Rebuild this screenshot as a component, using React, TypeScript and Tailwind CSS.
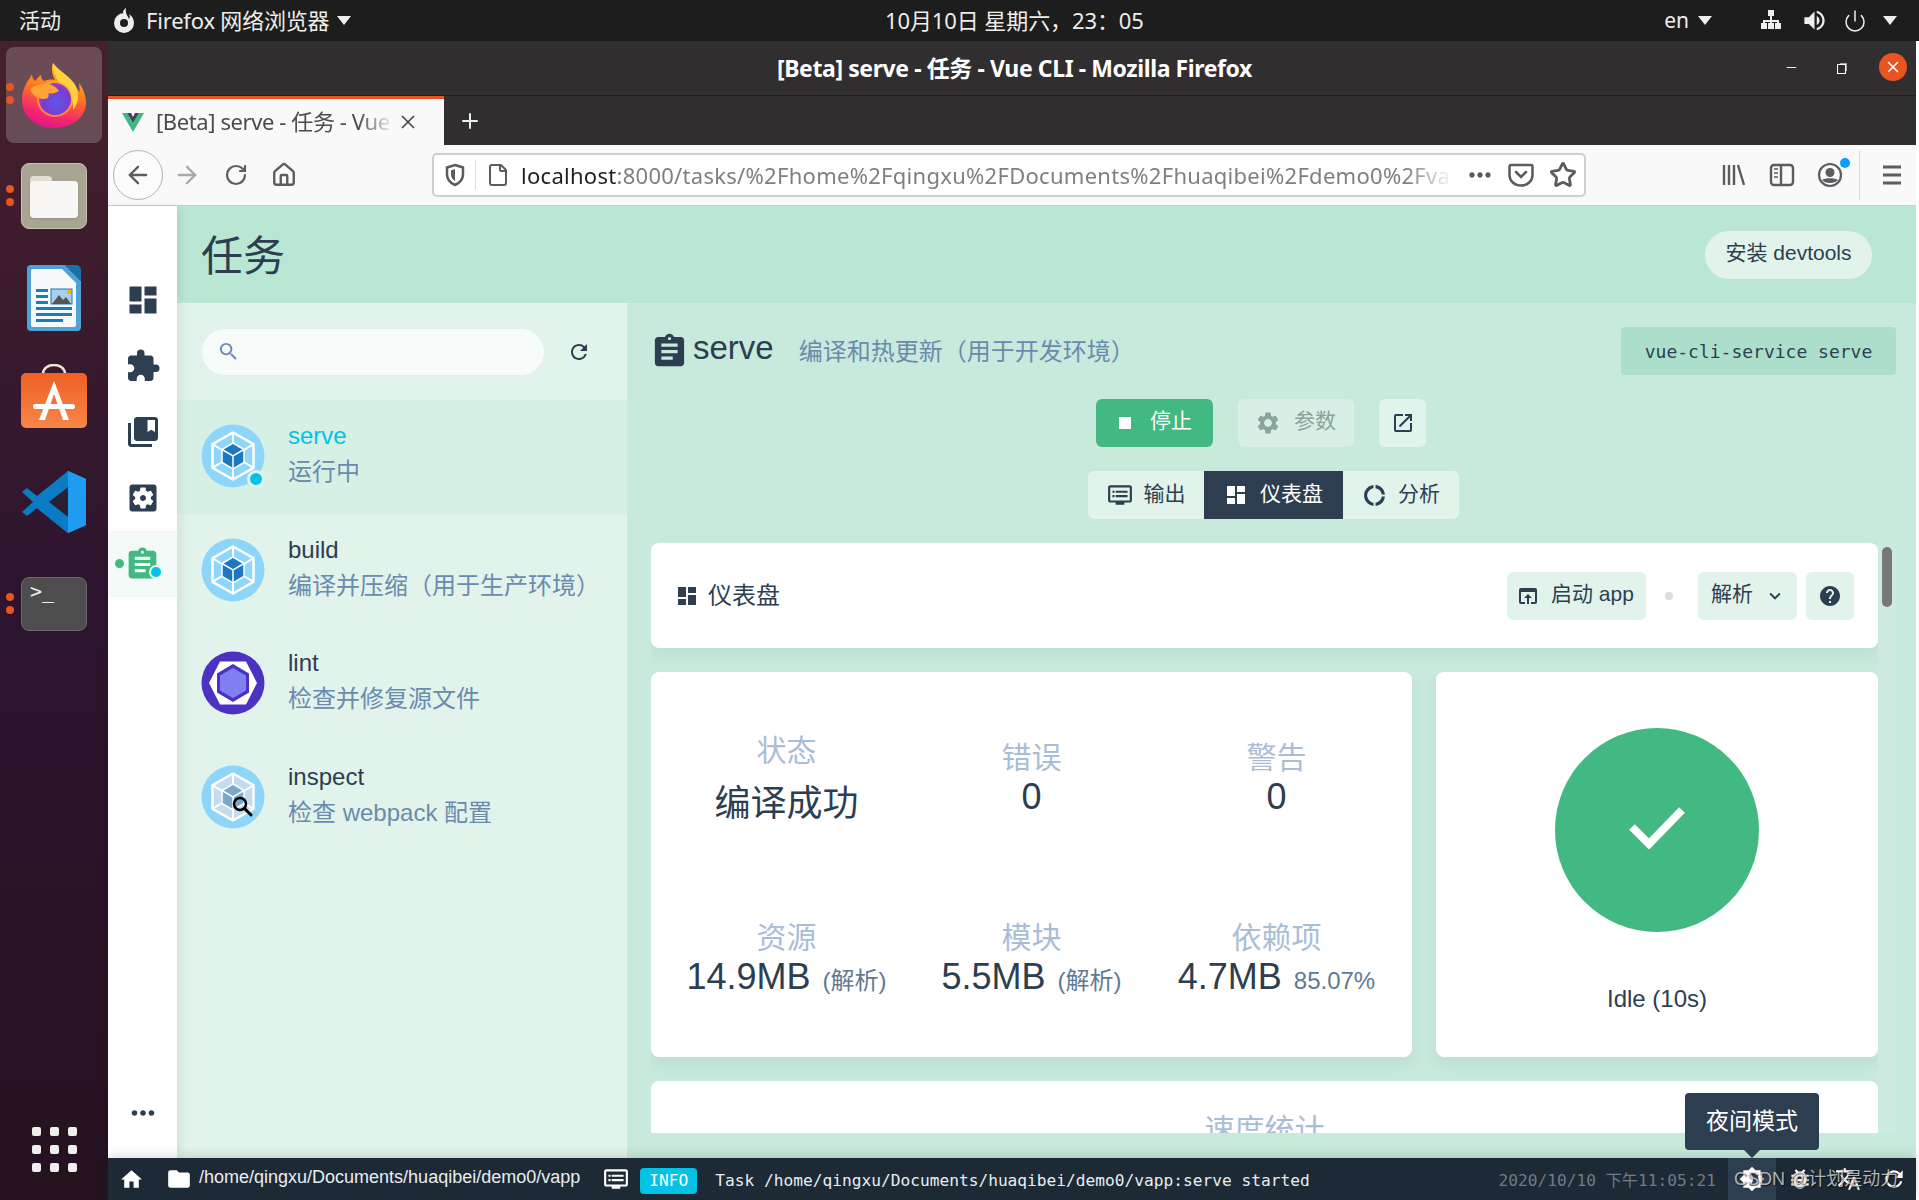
import { ArrowLeft, ArrowRight, RotateCw, Home, File, Star, Power, X, Plus, Minus } from "lucide-react";
import {
  MdDashboard,
  MdExtension,
  MdCollectionsBookmark,
  MdSettingsApplications,
  MdAssignment,
  MdSearch,
  MdRefresh,
  MdStop,
  MdSettings,
  MdOpenInNew,
  MdDvr,
  MdDonutLarge,
  MdOpenInBrowser,
  MdHelp,
  MdKeyboardArrowDown,
  MdHome,
  MdFolder,
  MdMoreHoriz,
  MdBrightness4,
  MdBugReport,
  MdTranslate,
  MdVolumeUp,
} from "react-icons/md";

const Caret = ({ className = "" }: { className?: string }) => (
  <svg width="14" height="9" viewBox="0 0 14 9" className={className}>
    <path d="M0 0h14L7 9z" fill="#eee" />
  </svg>
);

function FirefoxLogo() {
  return (
    <svg width="64" height="66" viewBox="0 0 64 66" className="mt-[2px]">
      <defs>
        <linearGradient id="ff-body" x1="0.7" y1="0" x2="0.4" y2="1">
          <stop offset="0" stopColor="#ffc629" />
          <stop offset="0.45" stopColor="#ff7a1f" />
          <stop offset="0.8" stopColor="#f5276c" />
          <stop offset="1" stopColor="#e31587" />
        </linearGradient>
        <radialGradient id="ff-globe" cx="0.55" cy="0.6" r="0.6">
          <stop offset="0" stopColor="#5f5ae6" />
          <stop offset="0.7" stopColor="#7b3ad0" />
          <stop offset="1" stopColor="#a73cc0" />
        </radialGradient>
      </defs>
      <path d="M31 1c5 8 19 14 25 27 2 3 2 2 1-7 4 5 7 13 7 20 0 14-14 25-32 25S0 55 0 38c0-8 3-16 8-22l2-4c0 3 1 5 3 7 2-2 4-5 6-6 0 3 1 5 3 6 3-1 7-2 11-1C30 13 29 7 31 1z" fill="url(#ff-body)" />
      <path d="M31 1c6 8 15 12 21 20 6 9 5 20-1 27 1-11-5-21-13-25-3-7-8-13-7-22z" fill="#ffd43b" />
      <circle cx="33" cy="37" r="18" fill="#ffb02e" opacity="0.65" />
      <circle cx="33" cy="37" r="16" fill="url(#ff-globe)" />
      <path d="M8 27c6-5 14-6 19-5 4 1 7 3 10 7-5 3-9 3-11 2 2 3 0 6-4 6-7 0-12-4-14-10z" fill="#ffa436" />
    </svg>
  );
}

function WriterLogo() {
  return (
    <svg width="56" height="68" viewBox="0 0 56 68">
      <path d="M5 1h34l16 16v46a4 4 0 0 1-4 4H5a4 4 0 0 1-4-4V5a4 4 0 0 1 4-4z" fill="#4da3d6" />
      <path d="M7 5h29l14 14v42a2 2 0 0 1-2 2H7a2 2 0 0 1-2-2V7a2 2 0 0 1 2-2z" fill="#f6f8fa" />
      <path d="M39 1l16 16V6a5 5 0 0 0-5-5z" fill="#1374ab" />
      <g fill="#1a7cb8">
        <rect x="10" y="25" width="12" height="3" />
        <rect x="10" y="31" width="12" height="3" />
        <rect x="10" y="37" width="12" height="3" />
        <rect x="10" y="43" width="36" height="3" />
        <rect x="10" y="49" width="36" height="3" />
        <rect x="10" y="55" width="27" height="3" />
      </g>
      <rect x="25" y="25" width="21" height="15" fill="#a9d0ea" stroke="#1a7cb8" />
      <path d="M26 40l7-9 4 5 3-3 5 7z" fill="#555" />
      <rect x="41" y="26" width="4" height="4" fill="#f4b400" />
    </svg>
  );
}

function StoreLogo() {
  return (
    <svg width="66" height="64" viewBox="0 0 66 64" className="-mt-[8px]">
      <defs>
        <linearGradient id="store-bg" x1="0" y1="0" x2="0" y2="1">
          <stop offset="0" stopColor="#f05f22" />
          <stop offset="1" stopColor="#f8864a" />
        </linearGradient>
      </defs>
      <path d="M22 10c0-12 22-12 22 0" fill="none" stroke="#f3e3d0" strokeWidth="2.5" />
      <rect x="0" y="9" width="66" height="55" rx="5" fill="url(#store-bg)" />
      <path d="M33 17L18 56h6l9-26 9 26h6z" fill="#fff" />
      <rect x="12" y="40" width="42" height="5" rx="2.5" fill="#fff" />
    </svg>
  );
}

function VsCodeLogo() {
  return (
    <svg width="64" height="64" viewBox="0 0 64 64">
      <path d="M46 1L64 9v46l-18 8-31-25z" fill="#1f9cf0" />
      <path d="M46 1L15 26 5 18 0 22l11 10L0 42l5 4 10-8 31 25 2-2V3z" fill="#0a7cc4" />
      <path d="M46 17v30L27 32z" fill="#2b2032" />
      <path d="M46 1l18 8v46l-18 8z" fill="#1f9cf0" />
    </svg>
  );
}

function Webpack({ muted = false }: { muted?: boolean }) {
  const dark = muted ? "#7ba7cd" : "#1c78c0";
  const light = muted ? "#c3dbee" : "#8ed6fb";
  return (
    <svg width="64" height="64" viewBox="0 0 64 64">
      <circle cx="32" cy="32" r="31.5" fill="#8dd6f9" />
      <path d="M32 8.5L52.5 20.2V43.8L32 55.5L11.5 43.8V20.2z" fill={light} stroke="#fff" strokeWidth="2.5" strokeLinejoin="round" />
      <path d="M32 8.5V19M52.5 20.2L43 26M52.5 43.8L43 38M32 55.5V45M11.5 43.8L21 38M11.5 20.2L21 26" stroke="#fff" strokeWidth="2" />
      <path d="M32 19L43 25.5V38.5L32 45L21 38.5V25.5z" fill={dark} stroke="#fff" strokeWidth="1.5" />
      <path d="M21 25.5L32 32L43 25.5M32 32V45" fill="none" stroke="#fff" strokeWidth="1.5" />
      {muted && (
        <>
          <circle cx="39" cy="39" r="6" fill="none" stroke="#000" strokeWidth="2.5" />
          <path d="M43.5 43.5L50 50" stroke="#000" strokeWidth="3" strokeLinecap="round" />
        </>
      )}
    </svg>
  );
}

function Eslint() {
  return (
    <svg width="64" height="64" viewBox="0 0 64 64">
      <circle cx="32" cy="32" r="31.5" fill="#4b32c3" />
      <path d="M19 10.5H45L56 32L45 53.5H19L8 32z" fill="#fff" />
      <path d="M32 13L48 22.5V41.5L32 51L16 41.5V22.5z" fill="#4b32c3" />
      <path d="M32 17L45 24.5V39.5L32 47L19 39.5V24.5z" fill="#8080f2" />
    </svg>
  );
}

function DockItem({ dots = false, active = false, children }: { dots?: boolean; active?: boolean; children: React.ReactNode }) {
  return (
    <div className="relative w-full h-[102px] shrink-0 flex items-center justify-center">
      {active && <div className="absolute left-[6px] top-[4px] w-[96px] h-[96px] rounded-lg bg-white/20" />}
      {dots && (
        <div className="absolute left-[6px] top-[40px] flex flex-col gap-[5px]">
          <span className="w-[8px] h-[8px] rounded-full bg-[#e95420]" />
          <span className="w-[8px] h-[8px] rounded-full bg-[#e95420]" />
        </div>
      )}
      <div className="relative">{children}</div>
    </div>
  );
}

function Dock() {
  return (
    <aside className="w-[108px] shrink-0 flex flex-col pt-[2px] bg-gradient-to-b from-[#47202c] via-[#2c142e] to-[#25121f]">
      <DockItem dots active>
        <FirefoxLogo />
      </DockItem>
      <DockItem dots>
        <div className="w-[66px] h-[66px] rounded-lg bg-[#aaa493] flex items-center justify-center border border-[#c6c1b3]">
          <div className="relative w-[48px] h-[42px] mt-[2px]">
            <div className="absolute left-0 top-0 w-[22px] h-[12px] rounded-t bg-[#e2dfd5]" />
            <div className="absolute left-0 top-[5px] w-[48px] h-[37px] rounded bg-[#f8f7f5] shadow" />
          </div>
        </div>
      </DockItem>
      <DockItem>
        <WriterLogo />
      </DockItem>
      <DockItem>
        <StoreLogo />
      </DockItem>
      <DockItem>
        <VsCodeLogo />
      </DockItem>
      <DockItem dots>
        <div className="w-[66px] h-[54px] rounded-lg bg-[#4d4d4d] border border-[#6b6b6b] pl-[8px] pt-[2px] text-[#eee] text-[20px] leading-[22px] font-['DejaVu_Sans_Mono',monospace]">
          &gt;_
        </div>
      </DockItem>
      <div className="mt-auto mb-[28px] mx-auto grid grid-cols-3 gap-x-[9px] gap-y-[9px]">
        {Array.from({ length: 9 }).map((_, i) => (
          <span key={i} className="w-[9px] h-[9px] rounded-[2px] bg-[#eeeeec]" />
        ))}
      </div>
    </aside>
  );
}

function TopBar() {
  return (
    <header className="h-[41px] shrink-0 bg-[#1d1d1d] flex items-center text-[#eeeeec] text-[21px] font-['Noto_Sans','Noto_Sans_CJK_SC',sans-serif]">
      <span className="ml-[19px]">活动</span>
      <svg width="24" height="28" viewBox="0 0 24 28" className="ml-[51px]">
        <path d="M12 6a10 10 0 1 0 10 10c0-4-2-7-5-9 1 2 1 4 0 5-1-3-4-5-3-11-3 2-4 5-2 5z" fill="#eee" />
        <circle cx="12" cy="16" r="4" fill="#1d1d1d" />
      </svg>
      <span className="ml-[10px] text-[22px] tracking-[-0.2px]">Firefox 网络浏览器</span>
      <Caret className="ml-[8px]" />
      <span className="absolute left-[885px] text-[22px] tracking-[-0.1px]">10月10日 星期六，23：05</span>
      <span className="ml-auto">en</span>
      <Caret className="ml-[9px]" />
      <svg width="24" height="24" viewBox="0 0 24 24" className="ml-[47px]">
        <path d="M9 1h6v6h-2v4h7v3h2v6h-6v-6h2v-1H13v1h2v6H9v-6h2v-1H6v1h2v6H2v-6h2v-3h7V7H9z" fill="#eee" />
      </svg>
      <MdVolumeUp className="ml-[18px]" size={27} />
      <Power className="ml-[15px]" size={24} strokeWidth={1.5} />
      <Caret className="ml-[16px] mr-[22px]" />
    </header>
  );
}

function WindowChrome() {
  return (
    <>
      <div className="relative h-[55px] shrink-0 bg-[#302e2f] border-b border-[#1f1d1e] flex items-center justify-center pl-[5px] text-white text-[23px] font-bold font-['Noto_Sans','Noto_Sans_CJK_SC',sans-serif] tracking-[-0.4px]">
        [Beta] serve - 任务 - Vue CLI - Mozilla Firefox
        <Minus className="absolute left-[1676px] top-[19px] text-white" size={15} strokeWidth={1.5} />
        <div className="absolute left-[1729px] top-[23px] w-[9px] h-[10px] border-[1.5px] border-white shadow-[2px_-2px_0_-1px_#aaa]" />
        <div className="absolute left-[1771px] top-[12px] w-[28px] h-[28px] rounded-full bg-[#e95420] flex items-center justify-center">
          <X className="text-white" size={18} strokeWidth={2} />
        </div>
      </div>
      <div className="h-[49px] shrink-0 bg-[#302e2f] flex">
        <div className="w-[336px] ml-0 bg-[#f9f9fa] border-t-[3px] border-[#e95420] flex items-center pl-[14px] relative font-['Noto_Sans','Noto_Sans_CJK_SC',sans-serif] text-[#4a4a4f] text-[22px]">
          <svg width="22" height="19" viewBox="0 0 22 19" className="shrink-0">
            <path d="M0 0h5l6 10L17 0h5L11 19z" fill="#41b883" />
            <path d="M5 0h4l2 4 2-4h4l-6 10z" fill="#35495e" />
          </svg>
          <span className="ml-[12px] -mt-[2px] w-[238px] overflow-hidden whitespace-nowrap tracking-[-0.4px] [mask-image:linear-gradient(to_right,black_85%,transparent)]">
            [Beta] serve - 任务 - Vue CLI
          </span>
          <X className="ml-[3px] text-[#444]" size={22} strokeWidth={1.8} />
        </div>
        <Plus className="ml-[14px] mt-[13px] text-[#eee]" size={24} strokeWidth={2} />
      </div>
      <div className="h-[61px] shrink-0 bg-[#f9f9fa] border-b border-[#ccc] flex items-center text-[#5b5b60]">
        <div className="ml-[5px] w-[50px] h-[50px] rounded-full border border-[#b5b5b5] bg-[#fbfbfb] flex items-center justify-center">
          <ArrowLeft size={28} strokeWidth={2} />
        </div>
        <div className="w-[48px] flex justify-center text-[#a9a9ad]">
          <ArrowRight size={28} strokeWidth={2} />
        </div>
        <div className="w-[48px] flex justify-center ml-[1px]">
          <RotateCw size={24} strokeWidth={2.2} />
        </div>
        <div className="w-[47px] flex justify-center">
          <Home size={26} strokeWidth={2.2} />
        </div>
        <div className="ml-[125px] w-[1154px] h-[44px] rounded-[5px] bg-white border-2 border-[#cfcfd1] flex items-center font-['Noto_Sans',sans-serif] text-[22px] whitespace-nowrap">
          <svg width="22" height="24" viewBox="0 0 22 24" className="ml-[10px] shrink-0">
            <path d="M11 2l8 2.5v7c0 5-3.5 8.5-8 10.5-4.5-2-8-5.5-8-10.5v-7z" fill="none" stroke="#5b5b60" strokeWidth="2.5" />
            <path d="M11 6v12c-2.5-1.5-4-4-4-6.5v-4z" fill="#5b5b60" />
          </svg>
          <div className="ml-[9px] w-px h-[30px] bg-[#ddd]" />
          <File className="ml-[10px] shrink-0" size={24} strokeWidth={2} />
          <div className="ml-[11px] w-[932px] overflow-hidden tracking-[0.28px] [mask-image:linear-gradient(to_right,black_95%,transparent)]">
            <span className="text-[#1f1f23]">localhost</span>
            <span className="text-[#7f7f82]">:8000/tasks/%2Fhome%2Fqingxu%2FDocuments%2Fhuaqibei%2Fdemo0%2Fvapp</span>
          </div>
          <MdMoreHoriz className="ml-[11px] shrink-0" size={32} />
          <svg width="26" height="26" viewBox="0 0 26 26" className="ml-[12px] shrink-0">
            <path d="M3 3h20a1.5 1.5 0 0 1 1.5 1.5V13c0 6-5 10.5-11.5 10.5S1.5 19 1.5 13V4.5A1.5 1.5 0 0 1 3 3z" fill="none" stroke="#5b5b60" strokeWidth="2.5" />
            <path d="M8 10l5 5 5-5" fill="none" stroke="#5b5b60" strokeWidth="2.5" strokeLinecap="round" />
          </svg>
          <Star className="ml-[15px] shrink-0" size={28} strokeWidth={2.4} />
        </div>
        <svg width="26" height="26" viewBox="0 0 26 26" className="ml-[135px]">
          <path d="M3 3v20M8 3v20M13 3v20M17 3l6 20" stroke="#5b5b60" strokeWidth="2.4" />
        </svg>
        <svg width="26" height="26" viewBox="0 0 26 26" className="ml-[22px]">
          <rect x="2" y="3" width="22" height="20" rx="3" fill="none" stroke="#5b5b60" strokeWidth="2.4" />
          <path d="M12 3v20" stroke="#5b5b60" strokeWidth="2.4" />
          <path d="M5 7h4M5 11h4M5 15h4" stroke="#5b5b60" strokeWidth="1.5" />
        </svg>
        <div className="relative ml-[22px] w-[26px] h-[26px]">
          <svg width="26" height="26" viewBox="0 0 26 26">
            <circle cx="13" cy="13" r="11" fill="none" stroke="#5b5b60" strokeWidth="2.2" />
            <circle cx="13" cy="10.5" r="4.5" fill="#5b5b60" />
            <path d="M5 18c3 4 13 4 16 0-3-2.5-13-2.5-16 0z" fill="#5b5b60" />
          </svg>
          <span className="absolute -top-[4px] -right-[7px] w-[10px] h-[10px] rounded-full bg-[#0a9dff]" />
        </div>
        <div className="ml-[16px] w-px h-[50px] bg-[#dcdcdc]" />
        <svg width="20" height="22" viewBox="0 0 20 22" className="ml-[22px]">
          <path d="M1 3h18M1 11h18M1 19h18" stroke="#5b5b60" strokeWidth="3" />
        </svg>
      </div>
    </>
  );
}

const navItems = [MdDashboard, MdExtension, MdCollectionsBookmark, MdSettingsApplications];

function NavBar() {
  return (
    <nav className="relative z-10 w-[69px] shrink-0 bg-white pt-[61px] flex flex-col shadow-[3px_0_10px_rgba(0,0,0,0.08)]">
      {navItems.map((Icon, i) => (
        <div key={i} className="h-[66px] flex items-center justify-center text-[#2c3e50]">
          <Icon size={36} />
        </div>
      ))}
      <div className="relative h-[66px] bg-[#f3faf7] flex items-center justify-center text-[#42b983]">
        <span className="absolute left-[7px] top-[28px] w-[9px] h-[9px] rounded-full bg-[#42b983]" />
        <MdAssignment size={37} />
        <span className="absolute left-[41px] top-[34px] w-[14px] h-[14px] rounded-full bg-[#03c2e6] border-[2px] border-[#e2f3ec]" />
      </div>
      <div className="mt-auto mb-[28px] flex justify-center text-[#2c3e50]">
        <MdMoreHoriz size={34} />
      </div>
    </nav>
  );
}

const tasks = [
  { name: "serve", desc: "运行中", icon: <Webpack />, selected: true },
  { name: "build", desc: "编译并压缩（用于生产环境）", icon: <Webpack /> },
  { name: "lint", desc: "检查并修复源文件", icon: <Eslint /> },
  { name: "inspect", desc: "检查 webpack 配置", icon: <Webpack muted /> },
];

function TaskList() {
  return (
    <section className="w-[450px] shrink-0 bg-[#e2f3ec]">
      <div className="h-[97px] flex items-center pl-[25px]">
        <div className="w-[342px] h-[46px] rounded-full bg-[#f7fbf9] flex items-center pl-[15px] text-[#6a8bad]">
          <MdSearch size={23} />
        </div>
        <MdRefresh className="ml-[23px] text-[#2c3e50]" size={24} />
      </div>
      {tasks.map((t) => (
        <div key={t.name} className={`h-[113.5px] flex items-center pl-[24px] ${t.selected ? "bg-[#d7f0e5]" : ""}`}>
          <div className="relative shrink-0 -mt-[1px]">
            {t.icon}
            {t.selected && (
              <span className="absolute left-[46px] top-[46px] w-[18px] h-[18px] rounded-full bg-[#03c2e6] border-[3px] border-[#e2f3ec]" />
            )}
          </div>
          <div className="ml-[23px] -mt-[5px] whitespace-nowrap">
            <div className={`text-[24px] leading-[36px] ${t.selected ? "text-[#03c2e6]" : "text-[#2c3e50]"}`}>{t.name}</div>
            <div className="text-[24px] leading-[36px] text-[#6a8bad]">{t.desc}</div>
          </div>
        </div>
      ))}
    </section>
  );
}

function Stat({ label, children, status = false, first = false }: { label: string; children: React.ReactNode; status?: boolean; first?: boolean }) {
  return (
    <div className={`flex flex-col items-center justify-center whitespace-nowrap ${first ? "pt-[22px]" : ""}`}>
      <div className={`text-[30px] leading-[36px] text-[#a9bed6] ${status ? "mb-[14px]" : ""}`}>{label}</div>
      <div className="text-[36px] leading-[42px] text-[#2c3e50]">{children}</div>
    </div>
  );
}

const Note = ({ children }: { children: React.ReactNode }) => (
  <span className="ml-[12px] text-[24px] text-[#5f7a92]">{children}</span>
);

function Dashboard() {
  return (
    <div className="flex-1 min-w-0 flex flex-col gap-[24px]">
      <div className="h-[105px] shrink-0 rounded-lg bg-white flex items-center pl-[24px] pr-[24px] shadow-[0_8px_16px_rgba(0,0,0,0.05)]">
        <MdDashboard className="text-[#2c3e50]" size={24} />
        <span className="ml-[9px] text-[24px] text-[#2c3e50]">仪表盘</span>
        <div className="ml-auto h-[48px] w-[139px] rounded-md bg-[#e2f3ec] flex items-center pl-[9px] text-[21px] text-[#2c3e50]">
          <MdOpenInBrowser size={24} />
          <span className="ml-[11px] -mt-[3px]">启动 app</span>
        </div>
        <span className="ml-[19px] w-[8px] h-[8px] rounded-full bg-[#d8dce4]" />
        <div className="ml-[25px] h-[48px] w-[99px] rounded-md bg-[#e2f3ec] flex items-center pl-[13px] text-[21px] text-[#2c3e50]">
          <span className="-mt-[3px]">解析</span>
          <MdKeyboardArrowDown className="ml-[11px]" size={22} />
        </div>
        <div className="ml-[9px] h-[48px] w-[48px] rounded-md bg-[#e2f3ec] flex items-center justify-center text-[#2c3e50]">
          <MdHelp size={24} />
        </div>
      </div>
      <div className="h-[385px] shrink-0 flex gap-[24px]">
        <div className="w-[761px] rounded-lg bg-white px-[13px] grid grid-cols-3 grid-rows-2 shadow-[0_8px_16px_rgba(0,0,0,0.05)]">
          <Stat label="状态" status first>
            编译成功
          </Stat>
          <Stat label="错误" first>
            0
          </Stat>
          <Stat label="警告" first>
            0
          </Stat>
          <Stat label="资源">
            14.9MB<Note>(解析)</Note>
          </Stat>
          <Stat label="模块">
            5.5MB<Note>(解析)</Note>
          </Stat>
          <Stat label="依赖项">
            4.7MB<Note>85.07%</Note>
          </Stat>
        </div>
        <div className="flex-1 rounded-lg bg-white flex flex-col items-center pt-[56px] shadow-[0_8px_16px_rgba(0,0,0,0.05)]">
          <div className="w-[204px] h-[204px] rounded-full bg-[#42b983] flex items-center justify-center">
            <svg width="56" height="42" viewBox="0 0 56 42" className="-mt-[4px]">
              <path d="M3 20L20 37L53 3" fill="none" stroke="#fff" strokeWidth="8" />
            </svg>
          </div>
          <div className="mt-[49px] text-[24px] text-[#2c3e50]">Idle (10s)</div>
        </div>
      </div>
      <div className="h-[200px] shrink-0 rounded-lg bg-white flex justify-center pt-[26px] text-[30px] text-[#a9bed6]">速度统计</div>
    </div>
  );
}

function TaskDetail() {
  const tabBase = "h-[48px] flex items-center justify-center text-[21px]";
  return (
    <section className="flex-1 min-w-0 bg-[#c7eadd] pt-[24px] pl-[24px] pr-[20px] pb-[25px] flex flex-col">
      <div className="h-[48px] shrink-0 flex items-center">
        <MdAssignment className="text-[#2c3e50] -ml-[1px]" size={39} />
        <span className="ml-[4px] -mt-[6px] text-[33px] text-[#2c3e50]">serve</span>
        <span className="ml-[25px] mt-[2px] text-[24px] text-[#6a8bad]">编译和热更新（用于开发环境）</span>
        <div className="ml-auto w-[275px] h-[48px] rounded-[4px] bg-[#abdfcb] flex items-center justify-center text-[18px] text-[#2c3e50] font-['DejaVu_Sans_Mono',monospace]">
          vue-cli-service serve
        </div>
      </div>
      <div className="mt-[24px] h-[48px] shrink-0 flex justify-center gap-[25px] pr-[25px]">
        <div className="w-[117px] rounded-md bg-[#42b983] flex items-center pl-[17px] text-white text-[21px]">
          <MdStop size={24} />
          <span className="ml-[13px] -mt-[4px]">停止</span>
        </div>
        <div className="w-[116px] rounded-md bg-[#d8efe6] flex items-center pl-[17px] text-[#8aa39c] text-[21px]">
          <MdSettings size={26} />
          <span className="ml-[13px] -mt-[4px]">参数</span>
        </div>
        <div className="w-[47px] rounded-md bg-[#e2f3ec] flex items-center justify-center text-[#2c3e50]">
          <MdOpenInNew size={24} />
        </div>
      </div>
      <div className="mt-[24px] h-[48px] shrink-0 flex justify-center">
        <div className={`${tabBase} w-[116px] rounded-l-md bg-[#e2f3ec] text-[#2c3e50]`}>
          <MdDvr size={26} />
          <span className="ml-[11px] -mt-[3px]">输出</span>
        </div>
        <div className={`${tabBase} w-[139px] bg-[#2c3e50] text-white`}>
          <MdDashboard size={24} />
          <span className="ml-[12px] -mt-[3px]">仪表盘</span>
        </div>
        <div className={`${tabBase} w-[116px] rounded-r-md bg-[#e2f3ec] text-[#2c3e50]`}>
          <MdDonutLarge size={25} />
          <span className="ml-[11px] -mt-[3px]">分析</span>
        </div>
      </div>
      <div className="mt-[24px] flex-1 min-h-0 flex overflow-hidden">
        <Dashboard />
        <div className="w-[18px] shrink-0 bg-[#cdeae0] flex justify-center pt-[4px]">
          <div className="w-[10px] h-[60px] rounded-full bg-[#777]" />
        </div>
      </div>
    </section>
  );
}

function StatusBar() {
  return (
    <footer className="relative z-20 h-[42px] shrink-0 bg-[#1d2935] flex items-center text-white shadow-[0_-3px_10px_rgba(0,0,0,0.12)]">
      <MdHome className="ml-[11px]" size={25} />
      <MdFolder className="ml-[22px]" size={26} />
      <span className="ml-[7px] -mt-[4px] text-[18px] text-[#e8edf2]">/home/qingxu/Documents/huaqibei/demo0/vapp</span>
      <MdDvr className="ml-[23px]" size={26} />
      <span className="ml-[11px] mt-[4px] w-[57px] h-[26px] rounded-[4px] bg-[#03c2e6] text-center text-[16.2px] leading-[26px] font-['DejaVu_Sans_Mono',monospace]">INFO</span>
      <span className="ml-[18px] mt-[4px] text-[16.2px] text-[#e8edf2] font-['DejaVu_Sans_Mono','Noto_Sans_CJK_SC',monospace] whitespace-nowrap">
        Task /home/qingxu/Documents/huaqibei/demo0/vapp:serve started
      </span>
      <span className="ml-auto mr-[12px] mt-[4px] text-[16.2px] text-[#6f7b86] font-['DejaVu_Sans_Mono','Noto_Sans_CJK_SC',monospace] whitespace-nowrap">
        2020/10/10 下午11:05:21
      </span>
      <div className="relative w-[48px] h-full bg-[#2c3e50] flex items-center justify-center">
        <MdBrightness4 size={26} />
        <div className="absolute left-[-43px] bottom-[50px] w-[134px] h-[57px] rounded-[4px] bg-[#2c3e50] flex items-center justify-center text-[23px] whitespace-nowrap">
          夜间模式
        </div>
        <span className="absolute left-[16px] -top-[8px] w-0 h-0 border-x-[8px] border-x-transparent border-t-[8px] border-t-[#2c3e50]" />
      </div>
      <div className="w-[48px] flex justify-center">
        <MdBugReport size={26} />
      </div>
      <div className="w-[48px] flex justify-center">
        <MdTranslate size={26} />
      </div>
      <div className="w-[44px] flex justify-center">
        <MdRefresh size={26} />
      </div>
      <span className="absolute left-[1626px] top-[8px] text-[18px] text-[#d8d8d8]/80 whitespace-nowrap [text-shadow:1px_1px_1px_rgba(0,0,0,0.6)]">
        CSDN @计划是动力
      </span>
    </footer>
  );
}

export default function App() {
  return (
    <div className="relative w-[1919px] h-[1200px] overflow-hidden flex flex-col bg-white font-['Liberation_Sans','Noto_Sans_CJK_SC',sans-serif]">
      <TopBar />
      <div className="flex-1 min-h-0 flex">
        <Dock />
        <div className="flex-1 min-w-0 flex flex-col">
          <WindowChrome />
          <div className="flex-1 min-h-0 flex flex-col">
            <div className="flex-1 min-h-0 flex">
              <NavBar />
              <div className="flex-1 min-w-0 flex flex-col bg-[#bae6d4]">
                <div className="h-[97px] shrink-0 flex items-center pl-[24px] pr-[44px]">
                  <h1 className="mt-[3px] text-[42px] text-[#2c3e50] font-normal">任务</h1>
                  <div className="ml-auto w-[167px] h-[48px] rounded-full bg-[#e2f3ec] flex items-center justify-center text-[21px] text-[#2c3e50]">
                    <span className="-mt-[3px]">安装 devtools</span>
                  </div>
                </div>
                <div className="flex-1 min-h-0 flex">
                  <TaskList />
                  <TaskDetail />
                </div>
              </div>
            </div>
            <StatusBar />
          </div>
        </div>
        <div className="w-[3px] shrink-0 bg-white" />
      </div>
    </div>
  );
}
